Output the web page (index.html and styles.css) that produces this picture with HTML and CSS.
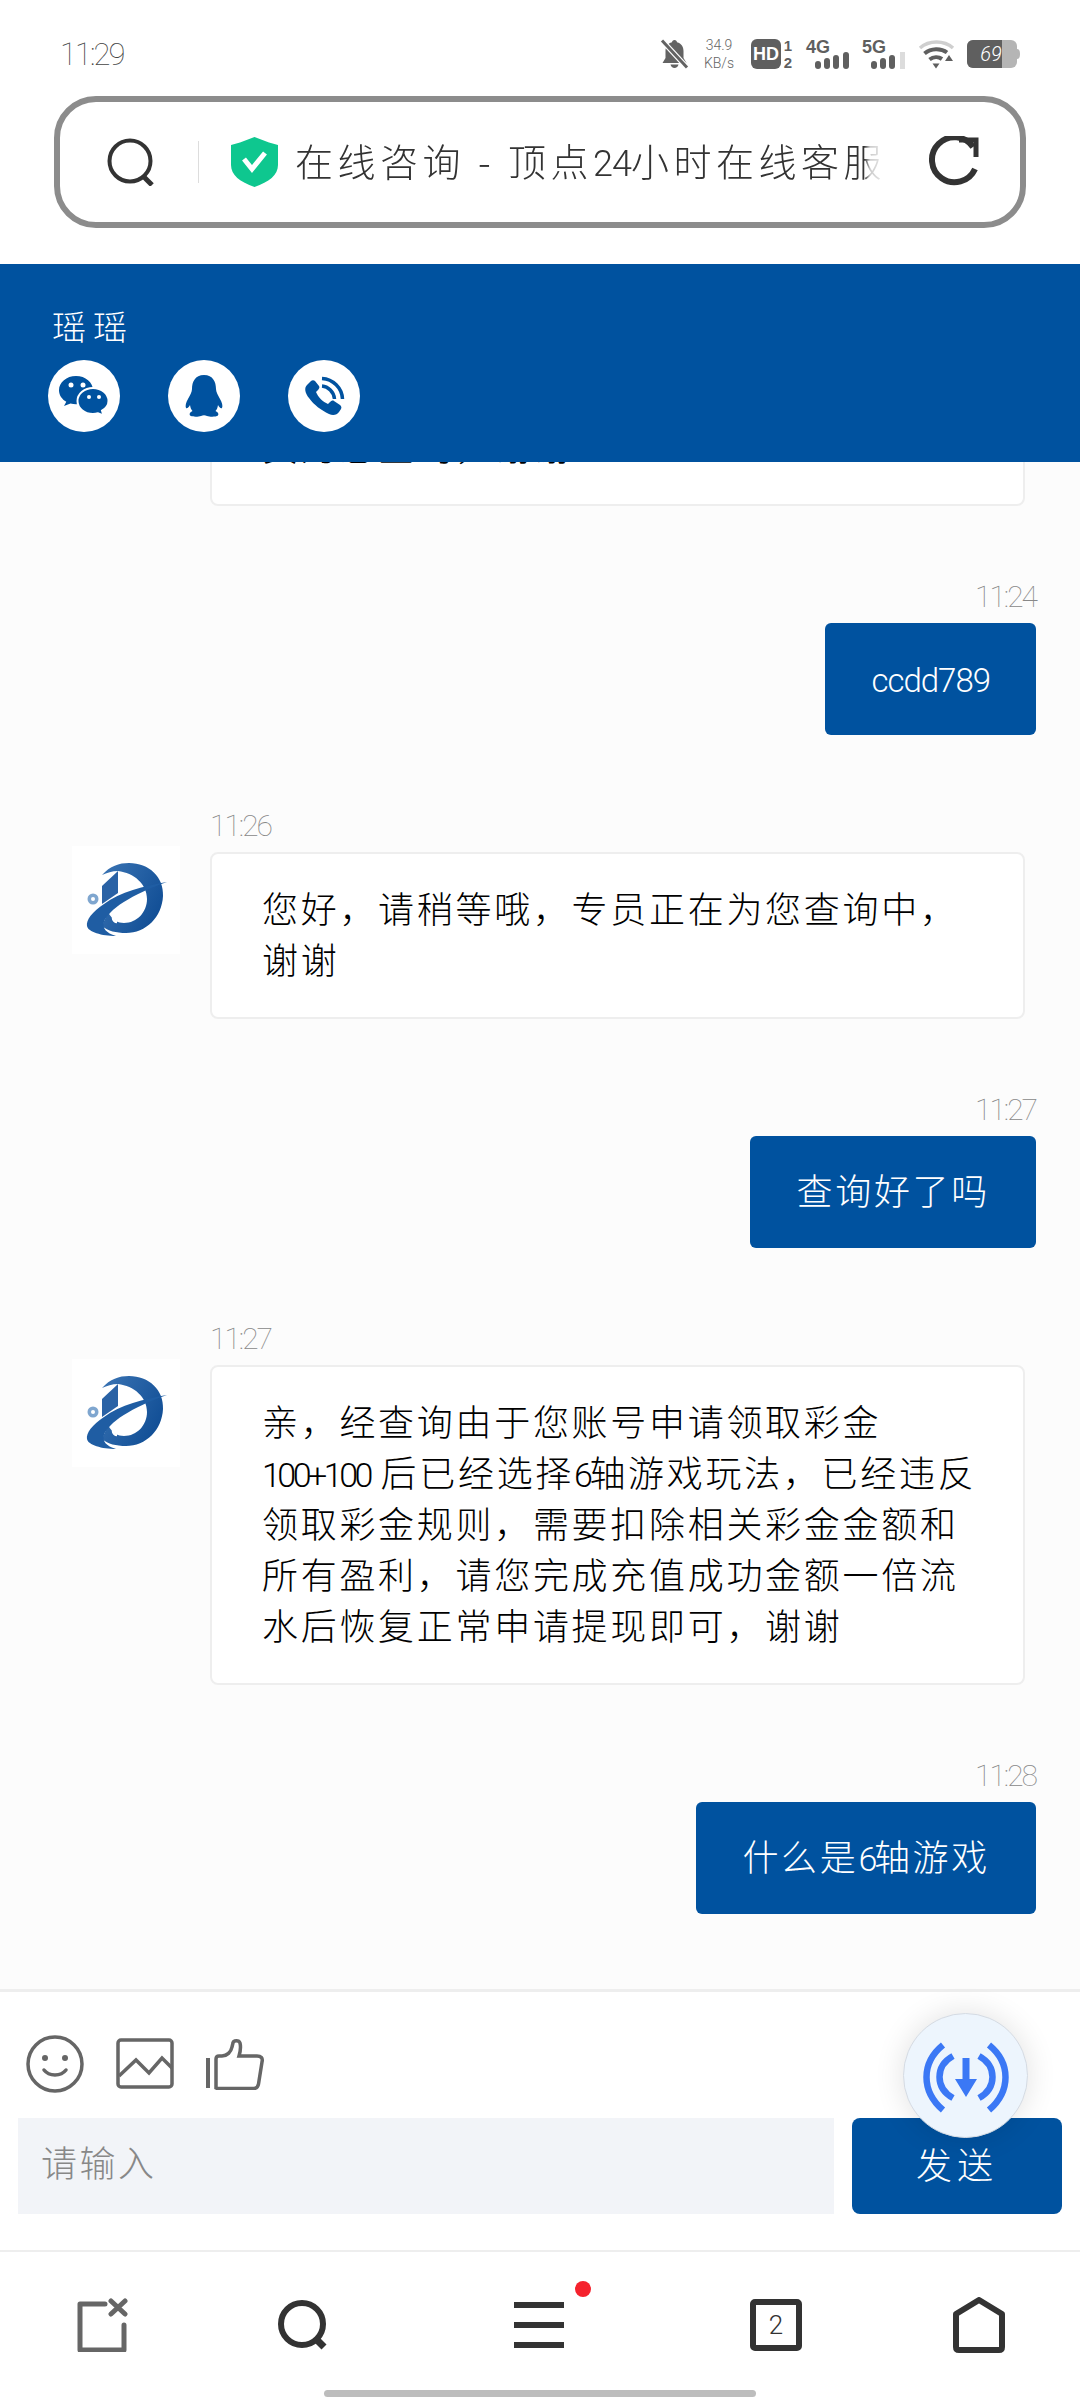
FILE: index.html
```html
<!DOCTYPE html>
<html lang="zh-CN">
<head>
    <meta charset="UTF-8">
    <meta name="viewport" content="width=device-width, initial-scale=1.0">
    <title>在线咨询</title>
    <link rel="stylesheet" href="styles.css">
</head>
<body>
<div class="page">

    <div class="status-bar">
        <span class="clock">11:29</span>
        <div class="status-icons">
            <svg class="ic-bell" width="27" height="30" viewBox="0 0 27 30">
                <path d="M13.5 1c-1.500 0-2.500 1-2.500 2.300C6.500 4.500 4.500 8 4.500 12v7L1.500 24h24l-3-5v-7c0-4-2-7.500-6.500-8.700C16 2 15 1 13.500 1zM9.500 25.500c.5 2.300 2 3.500 4 3.500s3.500-1.200 4-3.500z" fill="#636363"/>
                <path d="M1 1.500L26 28.500" stroke="#fff" stroke-width="5.500"/>
                <path d="M1 1.500L26 28.500" stroke="#636363" stroke-width="3"/>
            </svg>
            <div class="speed"><span>34.9</span><span>KB/s</span></div>
            <svg class="ic-hd" width="43" height="30" viewBox="0 0 43 30">
                <rect width="30" height="30" rx="6" fill="#5f5f5f"/>
                <text x="15" y="21" class="hd-text">HD</text>
                <text x="37" y="12" class="sim-text">1</text>
                <text x="37" y="29" class="sim-text">2</text>
            </svg>
            <svg class="ic-net" width="44" height="30" viewBox="0 0 44 30">
                <text x="0" y="14" class="net-text">4G</text>
                <rect x="9" y="22" width="6" height="8" rx="3" fill="#5f5f5f"/>
                <rect x="18" y="19" width="6" height="11" rx="3" fill="#5f5f5f"/>
                <rect x="27" y="16" width="6" height="14" rx="3" fill="#5f5f5f"/>
                <rect x="37" y="13" width="6" height="17" rx="3" fill="#5f5f5f"/>
            </svg>
            <svg class="ic-net" width="44" height="30" viewBox="0 0 44 30">
                <text x="0" y="14" class="net-text">5G</text>
                <rect x="9" y="22" width="6" height="8" rx="3" fill="#5f5f5f"/>
                <rect x="18" y="19" width="6" height="11" rx="3" fill="#5f5f5f"/>
                <rect x="27" y="16" width="6" height="14" rx="3" fill="#5f5f5f"/>
                <rect x="38" y="13" width="5" height="17" fill="#dcdcdc"/>
            </svg>
            <svg class="ic-wifi" width="37" height="30" viewBox="0 0 37 30">
                <path d="M2 9C11 1 26 1 35 9" fill="none" stroke="#cfcfcf" stroke-width="3.500"/>
                <path d="M6.500 14.500C13 9 23 9 29 13.500" fill="none" stroke="#5f5f5f" stroke-width="4"/>
                <path d="M11.500 20.500C15.500 17.500 20.500 17.500 24 20" fill="none" stroke="#5f5f5f" stroke-width="4"/>
                <path d="M14.500 24.500h7L18 29.500z" fill="#5f5f5f"/>
                <path d="M27 22l4-6 4 6z" fill="#5f5f5f"/>
            </svg>
            <svg class="ic-battery" width="53" height="28" viewBox="0 0 53 28">
                <rect x="0" y="0" width="50" height="28" rx="6" fill="#b5b5b5"/>
                <path d="M6 0h29v28H6a6 6 0 0 1-6-6V6a6 6 0 0 1 6-6z" fill="#5f5f5f"/>
                <path d="M50 9c2 0 3 1.500 3 5s-1 5-3 5z" fill="#b5b5b5"/>
                <text x="24" y="21" class="bat-text">69</text>
            </svg>
        </div>
    </div>

    <div class="address-wrap">
        <div class="address-bar">
            <svg class="addr-search" width="48" height="48" viewBox="0 0 48 48">
                <circle cx="23" cy="23" r="20.500" fill="none" stroke="#333" stroke-width="4"/>
                <path d="M36 38l9 9" stroke="#333" stroke-width="5"/>
            </svg>
            <span class="addr-line"></span>
            <svg class="addr-shield" width="47" height="50" viewBox="0 0 47 50">
                <path d="M23.500 0L38 5.500 47 8v20c0 10-9 17-23.500 22C9 45 0 38 0 28V8l9-2.500z" fill="#0ec78f"/>
                <path d="M13 22l8 10 13-16" fill="none" stroke="#fff" stroke-width="5"/>
            </svg>
            <span class="addr-title">在线咨询 - 顶点<span class="addr-num">24</span>小时在线客服</span>
            <svg class="addr-reload" width="54" height="52" viewBox="0 0 54 52">
                <path d="M47 11A22.500 22.500 0 1 0 49 33" fill="none" stroke="#333" stroke-width="6"/>
                <path d="M33 4h17v17" fill="none" stroke="#333" stroke-width="5"/>
            </svg>
        </div>
    </div>

    <header class="chat-header">
        <div class="agent-name">瑶瑶</div>
        <div class="contact-icons">
            <a class="contact">
                <svg width="72" height="72" viewBox="0 0 72 72">
                    <path d="M28 16c-9.500 0-17 6.300-17 14.200 0 5 3 9 7.300 11.600L16 46l6.500-2.500c1.800.5 3.600.7 5.500.7 9.500 0 17-6.300 17-14C45 22.300 37.500 16 28 16z" fill="#00529f"/>
                    <path d="M45 28c-8.500 0-15.500 5.800-15.500 13s7 13 15.500 13c1.800 0 3.500-.3 5-.8l5.500 2.300-1.500-4.800c4-2.300 6.500-5.800 6.500-9.700 0-7.200-7-13-15.500-13z" fill="#00529f" stroke="#fff" stroke-width="2"/>
                    <circle cx="23" cy="25" r="2.500" fill="#fff"/>
                    <circle cx="35" cy="25" r="2.500" fill="#fff"/>
                    <circle cx="41" cy="37" r="2" fill="#fff"/>
                    <circle cx="51" cy="37" r="2" fill="#fff"/>
                </svg>
            </a>
            <a class="contact">
                <svg width="72" height="72" viewBox="0 0 72 72">
                    <path d="M36 15C27 15 24 22 24 29C24 32 22 35 20 39C18 42 17 46 18 48C19 49 21 47 22 45C22.500 48 23 49 24.500 51C22 52 21 54 22 55.500C24 57 30 57 33 56C35 55 37 55 39 56C42 57 48 57 50 55.500C51 54 50 52 47.500 51C49 49 49.500 48 50 45C51 47 53 49 54 48C55 46 54 42 52 39C50 35 48 32 48 29C48 22 45 15 36 15Z" fill="#00529f"/>
                </svg>
            </a>
            <a class="contact">
                <svg width="72" height="72" viewBox="0 0 72 72">
                    <path d="M23 21L19 25C16 28 17 33 21 38C26 45 33 50 41 54C45 56 49 55 51 52L53 49C54 47 53 46 52 45L46 41C45 40 43 41 42 42L40 44C35 42 30 37 28 32L30 30C31 29 32 27 31 26L27 21C26 20 24 20 23 21Z" fill="#00529f"/>
                    <path d="M34 18.500C45 19 54 28 54.500 39" fill="none" stroke="#00529f" stroke-width="3.500"/>
                    <path d="M34 26C40 26.500 46 32 46.500 39" fill="none" stroke="#00529f" stroke-width="3.500"/>
                </svg>
            </a>
        </div>
    </header>

    <main class="chat-list">
        <div class="msg msg-left">
            <div class="avatar"></div>
            <div class="msg-body">
                <div class="bubble">您好，请提供一下您的游戏账号，以便专员为您查询，谢谢</div>
            </div>
        </div>

        <div class="msg msg-right">
            <div class="msg-body">
                <div class="msg-time">11:24</div>
                <div class="bubble"><span class="handle">ccdd789</span></div>
            </div>
        </div>

        <div class="msg msg-left">
            <svg class="avatar" width="108" height="108" viewBox="0 0 108 108">
                <use href="#logo"/>
            </svg>
            <div class="msg-body">
                <div class="msg-time">11:26</div>
                <div class="bubble">您好，请稍等哦，专员正在为您查询中，谢谢</div>
            </div>
        </div>

        <div class="msg msg-right">
            <div class="msg-body">
                <div class="msg-time">11:27</div>
                <div class="bubble">查询好了吗</div>
            </div>
        </div>

        <div class="msg msg-left">
            <svg class="avatar" width="108" height="108" viewBox="0 0 108 108">
                <use href="#logo"/>
            </svg>
            <div class="msg-body">
                <div class="msg-time">11:27</div>
                <div class="bubble">亲，经查询由于您账号申请领取彩金<span class="latin">100+100</span> 后已经选择<span class="latin">6</span>轴游戏玩法，已经违反领取彩金规则，需要扣除相关彩金金额和所有盈利，请您完成充值成功金额一倍流水后恢复正常申请提现即可，谢谢</div>
            </div>
        </div>

        <div class="msg msg-right">
            <div class="msg-body">
                <div class="msg-time">11:28</div>
                <div class="bubble">什么是<span class="latin">6</span>轴游戏</div>
            </div>
        </div>
    </main>

    <section class="composer">
        <div class="tools">
            <svg width="58" height="58" viewBox="0 0 58 58">
                <circle cx="29" cy="29" r="27" fill="none" stroke="#666" stroke-width="3.500"/>
                <circle cx="19" cy="23" r="3" fill="#666"/>
                <circle cx="39" cy="23" r="3" fill="#666"/>
                <path d="M18 35c5 6.500 17 6.500 22 0" fill="none" stroke="#666" stroke-width="3.500" stroke-linecap="round"/>
            </svg>
            <svg width="58" height="52" viewBox="0 0 58 52">
                <rect x="2" y="2" width="54" height="47" rx="3" fill="none" stroke="#666" stroke-width="3.500"/>
                <path d="M3 38l17-16 13 13 13-15 10 10" fill="none" stroke="#666" stroke-width="3.500"/>
            </svg>
            <svg width="58" height="52" viewBox="0 0 58 52">
                <path d="M2 20v30" stroke="#666" stroke-width="4"/>
                <path d="M10 50V21c0-2 1-3 3-3h3c5 0 9-4 10-9l1-4c.5-3 6-3 7 0 1 4 .5 8-1 13h18c4 0 6 2 5 6l-3.500 22c-.5 3-2.500 4.500-5 4.500H13c-2 0-3-.5-3-.5z" fill="none" stroke="#666" stroke-width="3.500"/>
            </svg>
        </div>
        <div class="send-row">
            <div class="msg-input">请输入</div>
            <button class="send-btn" type="button">发送</button>
        </div>
    </section>

    <nav class="bottom-nav">
        <a class="nav-item">
            <svg width="52" height="54" viewBox="0 0 52 54">
                <path d="M28 6H3v46h44V27" fill="none" stroke="#666" stroke-width="5" stroke-linecap="round" stroke-linejoin="round"/>
                <path d="M34 3l14 13M48 3L34 16" stroke="#666" stroke-width="5" stroke-linecap="round"/>
            </svg>
        </a>
        <a class="nav-item">
            <svg width="50" height="50" viewBox="0 0 50 50">
                <circle cx="24" cy="24" r="21" fill="none" stroke="#333" stroke-width="6"/>
                <path d="M37 38l9 9" stroke="#333" stroke-width="7"/>
            </svg>
        </a>
        <a class="nav-item nav-menu">
            <span class="menu-bar"></span>
            <span class="menu-bar"></span>
            <span class="menu-bar"></span>
            <span class="red-dot"></span>
        </a>
        <a class="nav-item tab-count">2</a>
        <a class="nav-item">
            <svg width="52" height="56" viewBox="0 0 52 56">
                <path d="M26 3L49 17v33c0 2-1 3-3 3H6c-2 0-3-1-3-3V17z" fill="none" stroke="#333" stroke-width="6" stroke-linejoin="round"/>
            </svg>
        </a>
    </nav>
    <div class="home-bar"></div>

    <div class="float-download">
        <svg width="125" height="125" viewBox="0 0 125 125">
            <g fill="none" stroke="#3b78f5" stroke-width="6.500">
                <path d="M40 32C18 50 18 78 40 97"/>
                <path d="M50 43C32 53 32 75 50 85"/>
                <path d="M86 32C108 50 108 78 86 97"/>
                <path d="M76 43C94 53 94 75 76 85"/>
            </g>
            <path d="M59.500 45h7v21H74L63 84 52 66h7.500z" fill="#3b78f5"/>
        </svg>
    </div>

    <!-- company logo, shared by the agent avatars -->
    <svg class="defs" width="0" height="0">
        <defs>
            <linearGradient id="logoBlue" x1="0" y1="0" x2="1" y2="0.600">
                <stop offset="0" stop-color="#3a74b4"/>
                <stop offset="1" stop-color="#124f96"/>
            </linearGradient>
            <g id="logo">
                <rect width="108" height="108" fill="#fff"/>
                <path d="M30 29C38 20 47 17 57 17C77 17 92 31 91 50C90 71 74 87 54 87C44 87 36 85 30 80L36 66C40 74 46 77 52 77C65 77 75 66 75 53C75 38 62 27 46 25C40 25 35 27 30 29Z" fill="url(#logoBlue)"/>
                <path d="M30 58V40L46 25V47Z" fill="#2a62a5"/>
                <path d="M95 36C72 40 48 46 32 58C20 66 14 74 15 80C16 86 30 90 44 90C34 87 30 82 32 76C36 64 60 48 95 36Z" fill="#1f5da3"/>
                <path d="M60 56C50 60 42 66 41 72C41 74 43 76 45 76" fill="none" stroke="#fff" stroke-width="2.500"/>
                <circle cx="21" cy="53" r="5.500" fill="#7fa6cf"/>
                <circle cx="21" cy="53" r="2" fill="#fff"/>
            </g>
        </defs>
    </svg>
</div>
</body>
</html>
```

FILE: styles.css
```css
* {
    box-sizing: border-box;
}

body {
    margin: 0;
    background: #fff;
    font-family: "Noto Sans CJK SC", "Noto Sans", sans-serif;
    font-weight: 300;
}

.page {
    position: relative;
    display: flex;
    flex-direction: column;
    width: 1080px;
    height: 2400px;
    overflow: hidden;
}

.defs {
    position: absolute;
}

/* status bar */
.status-bar {
    display: flex;
    justify-content: space-between;
    align-items: center;
    height: 96px;
    padding: 12px 60px 0;
    flex-shrink: 0;
}

.clock {
    font-family: Roboto, sans-serif;
    font-weight: 100;
    font-size: 31px;
    letter-spacing: -2px;
    color: #444;
}

.status-icons {
    display: flex;
    align-items: center;
    gap: 12px;
}

.status-icons svg {
    overflow: visible;
}

.ic-bell {
    margin-right: 4px;
}

.speed {
    display: flex;
    flex-direction: column;
    align-items: center;
    gap: 3px;
    margin-right: 5px;
    font-family: Roboto, sans-serif;
    font-weight: 300;
    font-size: 14px;
    line-height: 15px;
    color: #666;
}

.hd-text {
    font-family: "Liberation Sans", sans-serif;
    font-weight: 700;
    font-size: 18px;
    fill: #fff;
    text-anchor: middle;
}

.sim-text {
    font-family: "Liberation Sans", sans-serif;
    font-weight: 700;
    font-size: 15px;
    fill: #5f5f5f;
    text-anchor: middle;
}

.net-text {
    font-family: "Liberation Sans", sans-serif;
    font-weight: 700;
    font-size: 18px;
    fill: #5f5f5f;
}

.bat-text {
    font-family: Roboto, sans-serif;
    font-weight: 300;
    font-style: italic;
    font-size: 20px;
    fill: #fff;
    text-anchor: middle;
}

/* address bar */
.address-wrap {
    height: 168px;
    padding: 0 54px;
    flex-shrink: 0;
}

.address-bar {
    display: flex;
    align-items: center;
    height: 132px;
    padding: 0 40px 0 47px;
    border: 6px solid #8c8c8c;
    border-radius: 42px;
    background: #fff;
}

.addr-search {
    flex-shrink: 0;
}

.addr-line {
    width: 1px;
    height: 42px;
    margin: 0 32px 0 43px;
    background: #ddd;
    flex-shrink: 0;
}

.addr-shield {
    flex-shrink: 0;
    margin-right: 17px;
}

.addr-title {
    flex: 1;
    overflow: hidden;
    white-space: nowrap;
    padding-bottom: 6px;
    font-size: 38px;
    letter-spacing: 4.500px;
    color: #333;
    -webkit-mask-image: linear-gradient(to right, #000 95%, rgba(0, 0, 0, 0.25) 96%, transparent 100%);
    mask-image: linear-gradient(to right, #000 95%, rgba(0, 0, 0, 0.25) 96%, transparent 100%);
}

.addr-num {
    font-family: Roboto, sans-serif;
    font-weight: 300;
    font-size: 36px;
    letter-spacing: -1px;
}

.addr-reload {
    flex-shrink: 0;
    margin-left: 32px;
}

/* blue agent header */
.chat-header {
    position: relative;
    z-index: 1;
    height: 198px;
    padding: 42px 48px 0;
    background: #00529f;
    color: #fff;
    flex-shrink: 0;
}

.agent-name {
    margin-left: 4px;
    font-size: 34px;
    line-height: 40px;
    letter-spacing: 7px;
}

.contact-icons {
    display: flex;
    gap: 48px;
    margin-top: 14px;
}

.contact {
    width: 72px;
    height: 72px;
    border-radius: 50%;
    background: #fff;
}

.contact svg {
    display: block;
}

/* messages */
.chat-list {
    flex: 1;
    min-height: 0;
    overflow: hidden;
    display: flex;
    flex-direction: column;
    justify-content: flex-end;
    gap: 76px;
    padding: 0 44px 75px 72px;
    background: #fcfcfc;
}

.msg {
    display: flex;
    flex-shrink: 0;
}

.msg-left {
    gap: 30px;
    padding-right: 11px;
}

.msg-right {
    justify-content: flex-end;
}

.avatar {
    width: 108px;
    height: 108px;
    margin-top: 35px;
    flex-shrink: 0;
}

.msg-left .msg-body {
    flex: 1;
}

.msg-time {
    height: 41px;
    font-family: Roboto, sans-serif;
    font-weight: 100;
    font-size: 30px;
    line-height: 30px;
    letter-spacing: -2px;
    color: #888;
}

.msg-right .msg-time {
    text-align: right;
}

.bubble {
    font-size: 36px;
    line-height: 51px;
    letter-spacing: 2.700px;
}

.msg-left .bubble {
    padding: 28px 40px 33px 50px;
    border: 2px solid #eee;
    border-radius: 8px;
    background: #fff;
    color: #000;
}

.msg-right .bubble {
    padding: 28px 46px 33px;
    border-radius: 6px;
    background: #00529f;
    color: #fff;
}

.latin {
    font-family: Roboto, sans-serif;
    font-weight: 300;
    font-size: 34px;
    line-height: 1;
    letter-spacing: -3.500px;
}

.handle {
    font-family: Roboto, sans-serif;
    font-weight: 300;
    font-size: 33px;
    line-height: 1;
    letter-spacing: -1px;
}

/* composer */
.composer {
    height: 263px;
    padding: 43px 18px 0;
    border-top: 3px solid #eee;
    border-bottom: 2px solid #eee;
    background: #fff;
    flex-shrink: 0;
}

.tools {
    display: flex;
    align-items: center;
    gap: 32px;
    height: 58px;
    margin: 0 0 25px 8px;
}

.send-row {
    display: flex;
    gap: 18px;
}

.msg-input {
    width: 816px;
    height: 96px;
    padding-left: 23px;
    background: #f2f4f8;
    color: #888;
    font-size: 36px;
    line-height: 86px;
    letter-spacing: 2.500px;
}

.send-btn {
    width: 210px;
    height: 96px;
    padding: 0 0 6px;
    border: none;
    border-radius: 8px;
    background: #00529f;
    color: #fff;
    font-family: inherit;
    font-weight: 300;
    font-size: 36px;
    letter-spacing: 5px;
}

/* bottom navigation */
.bottom-nav {
    display: grid;
    grid-template-columns: 201px 236px 236px 203px auto;
    align-items: center;
    height: 138px;
    padding: 8px 0 0 77px;
    flex-shrink: 0;
}

.nav-item {
    display: block;
}

.nav-item svg {
    display: block;
}

.nav-menu {
    position: relative;
    width: 50px;
}

.menu-bar {
    display: block;
    height: 6px;
    margin-bottom: 14px;
    background: #333;
}

.menu-bar:nth-child(3) {
    margin-bottom: 0;
}

.red-dot {
    position: absolute;
    top: -21px;
    left: 61px;
    width: 16px;
    height: 16px;
    border-radius: 50%;
    background: #f5222d;
}

.tab-count {
    width: 52px;
    height: 52px;
    border: 6px solid #333;
    border-radius: 5px;
    color: #333;
    font-family: Roboto, sans-serif;
    font-weight: 300;
    font-size: 26px;
    line-height: 40px;
    text-align: center;
}

.home-bar {
    width: 432px;
    height: 7px;
    margin: 0 auto 3px;
    border-radius: 4px;
    background: #bdbdbd;
    flex-shrink: 0;
}

/* floating download button */
.float-download {
    position: absolute;
    top: 2013px;
    left: 903px;
    width: 125px;
    height: 125px;
    border: 1px solid #d5dbe3;
    border-radius: 50%;
    background: #edf5fd;
    box-shadow: 0 0 30px rgba(0, 0, 0, 0.12);
    z-index: 2;
}

.float-download svg {
    display: block;
    margin: -1px;
}
```
